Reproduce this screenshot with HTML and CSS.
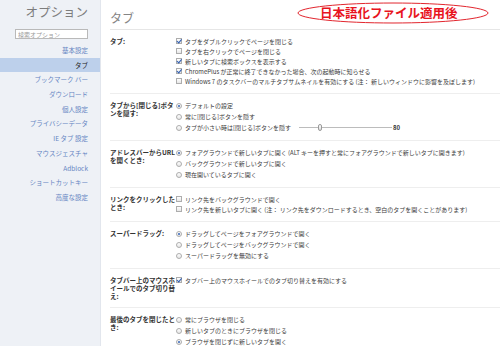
FILE: index.html
```html
<!DOCTYPE html>
<html>
<head>
    <meta charset="utf-8">
    <title>オプション - タブ</title>
    <link rel="stylesheet" href="styles.css">
</head>
<body>
<div class="page">
    <aside class="sidebar">
        <h1 class="side-title">オプション</h1>
        <input class="search" type="text" placeholder="検索オプション">
        <ul class="nav">
            <li>基本設定</li>
            <li class="active">タブ</li>
            <li>ブックマーク バー</li>
            <li>ダウンロード</li>
            <li>個人設定</li>
            <li>プライバシーデータ</li>
            <li>IE タブ 設定</li>
            <li>マウスジェスチャ</li>
            <li>Adblock</li>
            <li>ショートカットキー</li>
            <li>高度な設定</li>
        </ul>
    </aside>

    <main class="content">
        <div class="content-head">
            <h2 class="content-title">タブ</h2>
        </div>

        <section class="pref">
            <div class="pref-label">タブ:</div>
            <div class="pref-options">
                <div class="opt"><span class="check on"></span>タブをダブルクリックでページを閉じる</div>
                <div class="opt"><span class="check"></span>タブを右クリックでページを閉じる</div>
                <div class="opt"><span class="check on"></span>新しいタブに検索ボックスを表示する</div>
                <div class="opt"><span class="check on"></span>ChromePlus が正常に終了できなかった場合、次の起動時に知らせる</div>
                <div class="opt"><span class="check"></span>Windows 7 のタスクバーのマルチタブサムネイルを有効にする (注： 新しいウィンドウに影響を及ぼします)</div>
            </div>
        </section>

        <section class="pref">
            <div class="pref-label">タブから[閉じる]ボタンを隠す:</div>
            <div class="pref-options">
                <div class="opt radio-row"><span class="radio on"></span>デフォルトの設定</div>
                <div class="opt radio-row"><span class="radio"></span>常に[閉じる]ボタンを隠す</div>
                <div class="opt radio-row"><span class="radio"></span>タブが小さい時は[閉じる]ボタンを隠す
                    <span class="slider"><span class="slider-thumb"></span></span>
                    <span class="slider-value">80</span>
                </div>
            </div>
        </section>

        <section class="pref">
            <div class="pref-label">アドレスバーからURLを開くとき:</div>
            <div class="pref-options">
                <div class="opt radio-row"><span class="radio on"></span>フォアグラウンドで新しいタブに開く (ALT キーを押すと常にフォアグラウンドで新しいタブに開きます)</div>
                <div class="opt radio-row"><span class="radio"></span>バックグラウンドで新しいタブに開く</div>
                <div class="opt radio-row"><span class="radio"></span>現在開いているタブに開く</div>
            </div>
        </section>

        <section class="pref">
            <div class="pref-label">リンクをクリックしたとき:</div>
            <div class="pref-options">
                <div class="opt"><span class="check"></span>リンク先をバックグラウンドで開く</div>
                <div class="opt"><span class="check"></span>リンク先を新しいタブに開く (注： リンク先をダウンロードするとき、空白のタブを開くことがあります)</div>
            </div>
        </section>

        <section class="pref">
            <div class="pref-label">スーパードラッグ:</div>
            <div class="pref-options">
                <div class="opt radio-row"><span class="radio on"></span>ドラッグしてページをフォアグラウンドで開く</div>
                <div class="opt radio-row"><span class="radio"></span>ドラッグしてページをバックグラウンドで開く</div>
                <div class="opt radio-row"><span class="radio"></span>スーパードラッグを無効にする</div>
            </div>
        </section>

        <section class="pref">
            <div class="pref-label">タブバー上のマウスホイールでのタブ切り替え:</div>
            <div class="pref-options">
                <div class="opt"><span class="check on"></span>タブバー上のマウスホイールでのタブ切り替えを有効にする</div>
            </div>
        </section>

        <section class="pref">
            <div class="pref-label">最後のタブを閉じたとき:</div>
            <div class="pref-options">
                <div class="opt radio-row"><span class="radio"></span>常にブラウザを閉じる</div>
                <div class="opt radio-row"><span class="radio"></span>新しいタブのときにブラウザを閉じる</div>
                <div class="opt radio-row"><span class="radio on"></span>ブラウザを閉じずに新しいタブを開く</div>
            </div>
        </section>
    </main>

    <div class="note">
        <svg class="note-ring" width="192" height="22" viewBox="0 0 192 22">
            <ellipse cx="96" cy="11" rx="95" ry="10" fill="none" stroke="#e2262e" stroke-width="1"/>
        </svg>
        <span class="note-text">日本語化ファイル適用後</span>
    </div>
</div>
</body>
</html>
```

FILE: styles.css
```css
body {
    margin: 0;
    font-family: "Noto Sans CJK JP", "Noto Sans", sans-serif;
    color: #333;
    background-color: #fff;
}

.page {
    display: flex;
    position: relative;
    width: 500px;
    height: 346px;
    overflow: hidden;
}

/* left menu */
.sidebar {
    width: 100px;
    flex-shrink: 0;
    background-color: #eef1f6;
    border-right: 1px solid #e2e6ed;
}

.side-title {
    margin: 4px 12px 0 0;
    font-size: 12.5px;
    line-height: 16px;
    font-weight: normal;
    color: #7d7d7d;
    text-align: right;
}

.search {
    display: block;
    box-sizing: border-box;
    width: 73px;
    height: 10px;
    margin: 9px 0 0 15px;
    padding: 0 2px;
    border: 1px solid #b9b9b9;
    background-color: #fff;
    font-family: inherit;
    font-size: 6px;
    outline: none;
}

.search::placeholder {
    color: #9a9a9a;
}

.nav {
    list-style: none;
    margin: 4px 0 0;
    padding: 0;
}

.nav li {
    height: 14.7px;
    line-height: 14.7px;
    padding-right: 12px;
    font-size: 6.5px;
    color: #6484c2;
    text-align: right;
}

.nav li.active {
    background-color: #bdd0eb;
    color: #222;
}

/* right side */
.content {
    flex: 1;
    padding-left: 9px;
}

.content-head {
    padding: 11px 0 5px;
    border-bottom: 1px solid #e6e6e6;
}

.content-title {
    margin: 0;
    font-size: 12px;
    line-height: 13px;
    font-weight: normal;
    color: #858585;
}

.pref {
    display: flex;
    padding: 6px 0 7px;
    border-bottom: 1px solid #eeeeee;
}

.pref:first-of-type {
    padding-top: 6px;
}

.pref-label {
    width: 66px;
    flex-shrink: 0;
    padding-top: 1px;
    font-size: 6.5px;
    line-height: 8px;
    font-weight: bold;
    color: #333;
}

.opt {
    display: flex;
    align-items: center;
    height: 10px;
    gap: 3px;
    font-size: 6px;
    color: #3a3a3a;
    white-space: nowrap;
}

.radio-row {
    height: 11px;
}

.check {
    position: relative;
    width: 4px;
    height: 4px;
    border: 1px solid #adadad;
    background: linear-gradient(#fff, #e6e6e6);
    flex-shrink: 0;
}

.check.on::after {
    content: "";
    position: absolute;
    left: 1px;
    top: -1px;
    width: 1.5px;
    height: 3.5px;
    border: solid #2d5db3;
    border-width: 0 1px 1px 0;
    transform: rotate(40deg);
}

.radio {
    position: relative;
    width: 4px;
    height: 4px;
    border: 1px solid #adadad;
    border-radius: 50%;
    background: linear-gradient(#fff, #e6e6e6);
    flex-shrink: 0;
}

.radio.on::after {
    content: "";
    position: absolute;
    left: 1px;
    top: 1px;
    width: 2px;
    height: 2px;
    border-radius: 50%;
    background-color: #3564b8;
}

.slider {
    position: relative;
    width: 93px;
    height: 1px;
    margin-left: 5px;
    background-color: #bcbcbc;
}

.slider-thumb {
    position: absolute;
    left: 19px;
    top: -3px;
    box-sizing: border-box;
    width: 4px;
    height: 7px;
    border: 1px solid #9a9a9a;
    border-radius: 2px;
    background: linear-gradient(#fff, #dcdcdc);
}

.slider-value {
    margin-left: -2px;
    font-size: 6px;
    font-weight: bold;
    color: #333;
}

/* red annotation on top of the screenshot */
.note {
    position: absolute;
    left: 297px;
    top: 2px;
    width: 192px;
    height: 22px;
}

.note-ring {
    display: block;
}

.note-text {
    position: absolute;
    left: 23px;
    top: 4px;
    font-size: 12.5px;
    line-height: 13px;
    font-weight: bold;
    color: #e8141e;
    white-space: nowrap;
}
```
